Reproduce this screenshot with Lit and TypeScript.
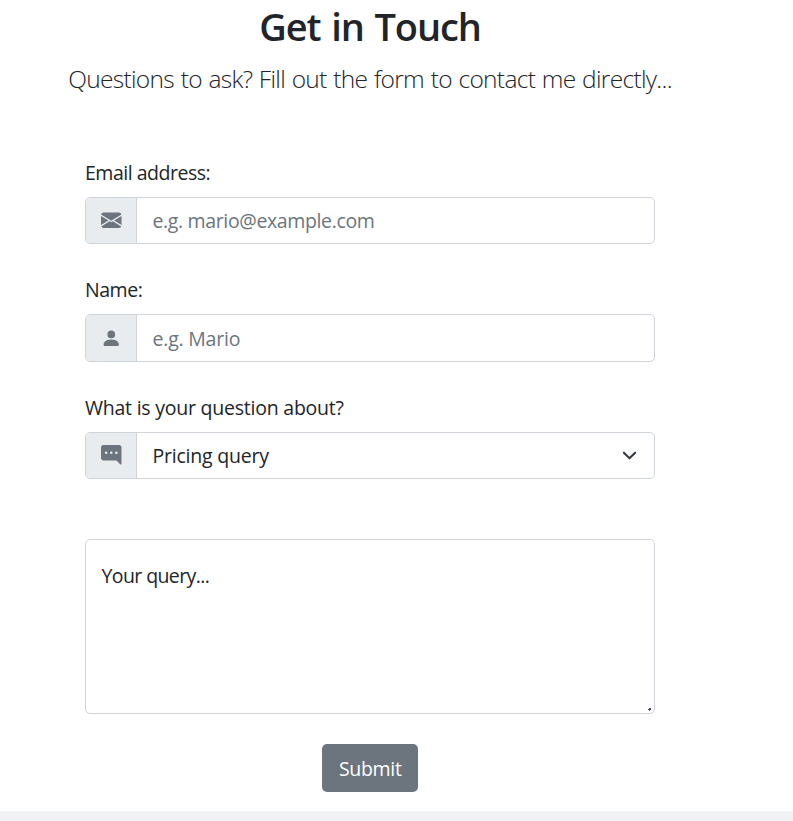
import { LitElement, html, css, svg } from "lit";
import { customElement } from "lit/decorators.js";

const envelope = svg`<path d="M.05 3.555A2 2 0 0 1 2 2h12a2 2 0 0 1 1.95 1.555L8 8.414.05 3.555ZM0 4.697v7.104l5.803-3.558L0 4.697ZM6.761 8.83l-6.57 4.027A2 2 0 0 0 2 14h12a2 2 0 0 0 1.808-1.144l-6.57-4.027L8 9.586l-1.239-.757Zm3.436-.586L16 11.801V4.697l-5.803 3.546Z"/>`;
const person = svg`<path d="M3 14s-1 0-1-1 1-4 6-4 6 3 6 4-1 1-1 1H3Zm5-6a3 3 0 1 0 0-6 3 3 0 0 0 0 6Z"/>`;
const chat = svg`<path d="M16 2a2 2 0 0 0-2-2H2a2 2 0 0 0-2 2v8a2 2 0 0 0 2 2h9.586a1 1 0 0 1 .707.293l2.853 2.853a.5.5 0 0 0 .854-.353V2ZM5 6a1 1 0 1 1-2 0 1 1 0 0 1 2 0Zm4 0a1 1 0 1 1-2 0 1 1 0 0 1 2 0Zm3 1a1 1 0 1 1 0-2 1 1 0 0 1 0 2Z"/>`;

@customElement("app-root")
export class AppRoot extends LitElement {
  static styles = css`
    :host {
      display: flex;
      flex-direction: column;
      height: 821px;
      overflow: hidden;
      background: #fff;
      color: #212529;
      font-family: "Open Sans", "Noto Sans", sans-serif;
      font-size: 19.5px;
      line-height: 30px;
    }
    * { box-sizing: border-box; }
    .contact {
      width: 740px;
      height: 811px;
      flex: none;
      display: flex;
      flex-direction: column;
      align-items: center;
      padding-top: 2px;
    }
    .title {
      margin: 0;
      font-size: 38px;
      line-height: 48px;
      font-weight: 600;
      letter-spacing: -1.1px;
      word-spacing: 2px;
      white-space: nowrap;
    }
    .lead {
      margin: 10px 0 0;
      font-size: 24.5px;
      line-height: 38px;
      font-weight: 300;
      letter-spacing: -0.68px;
      word-spacing: 0.9px;
      white-space: nowrap;
    }
    .form {
      width: 570px;
      margin-top: 58.5px;
      display: flex;
      flex-direction: column;
    }
    .label {
      padding-top: 1px;
      margin-bottom: 9px;
      white-space: nowrap;
    }
    .group {
      display: flex;
      height: 47.5px;
      margin-bottom: 30px;
      border: 1px solid #ced4da;
      border-radius: 5px;
      overflow: hidden;
    }
    .addon {
      width: 51px;
      flex: none;
      display: flex;
      align-items: center;
      justify-content: center;
      padding-left: 0.5px;
      background: #e9ecef;
      border-right: 1px solid #ced4da;
      color: #6c757d;
    }
    .icon {
      width: 20.5px;
      height: 20.5px;
      fill: currentColor;
      display: block;
    }
    .control {
      flex: 1;
      min-width: 0;
      border: 0;
      outline: 0;
      margin: 0;
      padding: 2px 15.5px 0;
      background: none;
      font: inherit;
      color: inherit;
      letter-spacing: inherit;
    }
    .control::placeholder { color: #6c757d; opacity: 1; }
    .select {
      display: flex;
      align-items: center;
      justify-content: space-between;
    }
    .chevron {
      width: 15px;
      height: 15px;
      margin: 0 2px 2px 0;
      fill: none;
      stroke: #343a40;
      stroke-width: 2.2;
      stroke-linecap: round;
      stroke-linejoin: round;
    }
    .message {
      height: 175px;
      margin-top: 30px;
      padding: 21px 15px 19px 15.5px;
      border: 1px solid #ced4da;
      border-radius: 5px;
      letter-spacing: -0.6px;
      display: flex;
      justify-content: space-between;
    }
    .grip {
      width: 3px;
      height: 3px;
      align-self: flex-end;
      margin: 0 -12px -17px 0;
      fill: #4a4d50;
    }
    .submit {
      align-self: center;
      width: 96px;
      height: 48px;
      margin-top: 30px;
      padding: 2px 0 0 0.5px;
      border: 0;
      border-radius: 5px;
      background: #6c757d;
      color: #fff;
      font: inherit;
      line-height: 30px;
      letter-spacing: -0.3px;
    }
    .email-label { letter-spacing: -0.48px; }
    .email { letter-spacing: -0.36px; word-spacing: 1px; }
    .name-label { letter-spacing: -0.45px; }
    .name { letter-spacing: -0.22px; word-spacing: 0.5px; }
    .topic-label { letter-spacing: -0.23px; }
    .topic { letter-spacing: -0.22px; }
    .footer { flex: 1; background: #f1f2f4; }
  `;

  icon(shape: unknown) {
    return html`<span class="addon"><svg class="icon" viewBox="0 0 16 16">${shape}</svg></span>`;
  }

  render() {
    return html`
      <section class="contact">
        <h2 class="title">Get in Touch</h2>
        <p class="lead">Questions to ask? Fill out the form to contact me directly...</p>
        <div class="form">
          <label class="label email-label" for="email">Email address:</label>
          <div class="group email">
            ${this.icon(envelope)}
            <input class="control" id="email" placeholder="e.g. mario@example.com" />
          </div>
          <label class="label name-label" for="name">Name:</label>
          <div class="group name">
            ${this.icon(person)}
            <input class="control" id="name" placeholder="e.g. Mario" />
          </div>
          <label class="label topic-label">What is your question about?</label>
          <div class="group topic">
            ${this.icon(chat)}
            <div class="control select" role="combobox">
              <span>Pricing query</span>
              <svg class="chevron" viewBox="0 0 16 16"><path d="m2 5 6 6 6-6" /></svg>
            </div>
          </div>
          <div class="message">
            <span>Your query...</span>
            <svg class="grip" viewBox="0 0 3 3"><path d="M1 0h2v2H2v1H1V2H0V1h1z" /></svg>
          </div>
          <button class="submit">Submit</button>
        </div>
      </section>
      <footer class="footer"></footer>
    `;
  }
}
